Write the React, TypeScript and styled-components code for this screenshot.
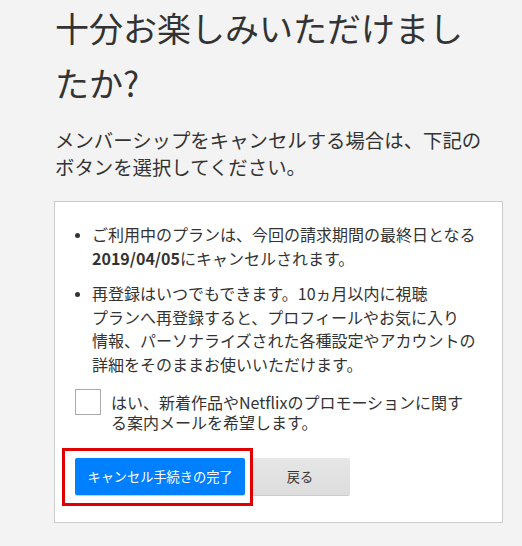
import React from "react";
import styled, { createGlobalStyle } from "styled-components";

const Global = createGlobalStyle`
  html, body { margin: 0; padding: 0; background: #f3f3f3; }
  body {
    font-family: "Noto Sans CJK JP", "Liberation Sans", sans-serif;
    color: #333;
  }
`;

const Page = styled.main`
  width: 449px;
  padding: 0 0 0 54px;
  display: flex;
  flex-direction: column;
`;

const Title = styled.h1`
  margin: 0;
  padding: 0 0 0 1px;
  width: 430px;
  font-size: 34px;
  font-weight: 400;
  line-height: 55px;
  color: #333;
`;

const Lead = styled.p`
  margin: 16px 0 0 1px;
  width: 440px;
  font-size: 19.4px;
  line-height: 27px;
  color: #333;
`;

const Card = styled.section`
  margin-top: 21px;
  background: #fff;
  border: 1px solid #ccc;
  padding: 21px 20px 27px 20px;
  display: flex;
  flex-direction: column;
`;

const List = styled.ul`
  list-style: none;
  margin: 0;
  padding: 0;
  display: flex;
  flex-direction: column;
  gap: 12px;
`;

const Item = styled.li`
  display: flex;
  font-size: 16px;
  line-height: 23.5px;
  color: #333;
  &::before {
    content: "";
    flex: none;
    width: 5px;
    height: 5px;
    border-radius: 50%;
    background: #333;
    margin: 9.5px 12px 0 0;
  }
`;

const Strong = styled.b`
  font-weight: 700;
`;

const CheckRow = styled.label`
  margin-top: 13px;
  display: flex;
  align-items: flex-start;
  gap: 10px;
`;

const Box = styled.span`
  flex: none;
  width: 26px;
  height: 26px;
  box-sizing: border-box;
  border: 1px solid #aaa;
  background: #fff;
`;

const CheckText = styled.span`
  font-size: 16px;
  line-height: 20px;
  color: #333;
  padding-top: 3px;
  width: 355px;
`;

const Buttons = styled.div`
  margin-top: 26px;
  display: flex;
  gap: 5px;
`;

const Highlight = styled.span`
  position: relative;
  display: inline-flex;
  &::after {
    content: "";
    position: absolute;
    left: -13px;
    top: -10px;
    width: 191px;
    height: 58px;
    box-sizing: border-box;
    border: 3px solid #e00000;
    pointer-events: none;
  }
`;

const Button = styled.button<{ $primary?: boolean }>`
  height: 37px;
  border: none;
  border-radius: 2px;
  font-family: inherit;
  font-size: 13.2px;
  cursor: pointer;
  padding: 0;
  width: ${(p) => (p.$primary ? "170px" : "100px")};
  color: ${(p) => (p.$primary ? "#fff" : "#333")};
  background: ${(p) =>
    p.$primary ? "#0080ff" : "linear-gradient(#e6e6e6, #dddddd)"};
  box-shadow: 0 1px 0 rgba(0, 0, 0, 0.2);
`;

export default function App() {
  return (
    <>
      <Global />
      <Page>
        <Title>十分お楽しみいただけましたか?</Title>
        <Lead>メンバーシップをキャンセルする場合は、下記のボタンを選択してください。</Lead>
        <Card>
          <List>
            <Item>
              <span>
                ご利用中のプランは、今回の請求期間の最終日となる
                <br />
                <Strong>2019/04/05</Strong>にキャンセルされます。
              </span>
            </Item>
            <Item>
              <span>
                再登録はいつでもできます。10ヵ月以内に視聴
                <br />
                プランへ再登録すると、プロフィールやお気に入り
                <br />
                情報、パーソナライズされた各種設定やアカウントの
                <br />
                詳細をそのままお使いいただけます。
              </span>
            </Item>
          </List>
          <CheckRow>
            <Box />
            <CheckText>
              はい、新着作品やNetflixのプロモーションに関す
              <br />
              る案内メールを希望します。
            </CheckText>
          </CheckRow>
          <Buttons>
            <Highlight>
              <Button $primary>キャンセル手続きの完了</Button>
            </Highlight>
            <Button>戻る</Button>
          </Buttons>
        </Card>
      </Page>
    </>
  );
}
